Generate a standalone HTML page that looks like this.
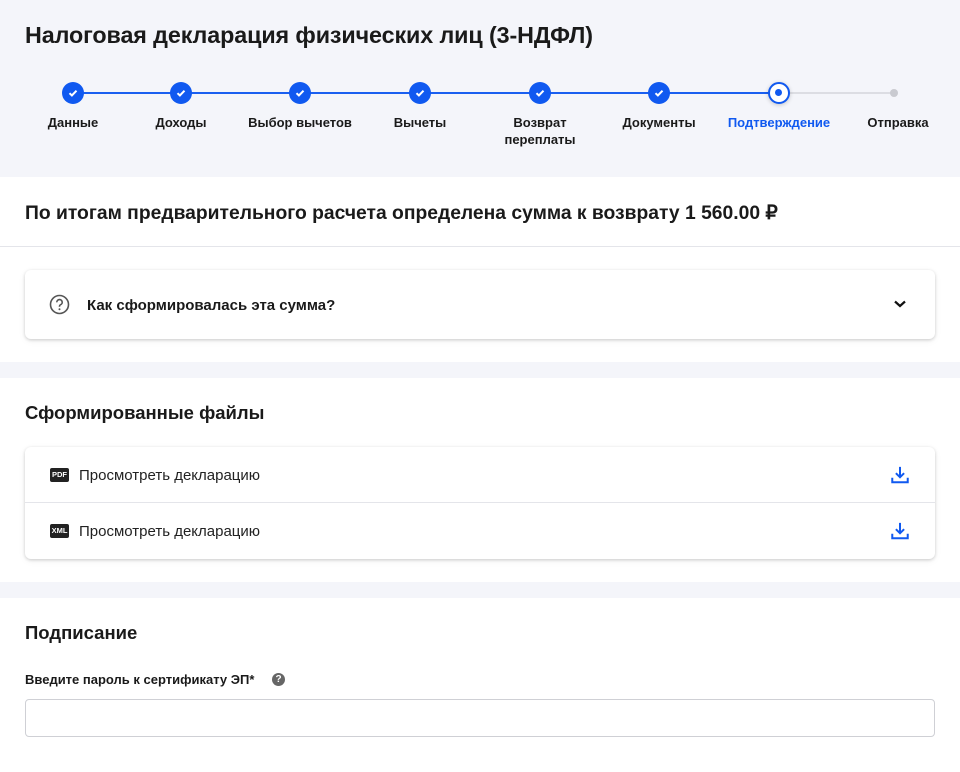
<!DOCTYPE html>
<html><head><meta charset="utf-8"><style>
*{margin:0;padding:0;box-sizing:border-box}
body{width:960px;height:772px;overflow:hidden;background:#f4f5fa;font-family:"Liberation Sans",Arial,sans-serif;color:#1a1a1a;position:relative}
.a{position:absolute}
h1{position:absolute;left:25px;top:22px;font-size:23.3px;font-weight:bold;letter-spacing:-0.1px}
.line{position:absolute;top:92px;height:2px;background:#1a5ff0}
.dot{position:absolute;width:22px;height:22px;border-radius:50%;background:#1059f0;top:82px;margin-left:-11px}
.dot svg{position:absolute;left:5px;top:5px}
.lbl{position:absolute;top:113px;font-size:13px;font-weight:bold;text-align:center;width:120px;margin-left:-60px;line-height:17px}
.sec{position:absolute;left:0;width:960px;background:#fff}
.card{position:absolute;left:25px;width:910px;background:#fff;border-radius:6px;box-shadow:0 1px 3px rgba(0,0,0,.18),0 2px 8px rgba(0,0,0,.05)}
.ft{font-size:15px;color:#222}
.ic{position:absolute;left:25px;width:19px;height:14px;background:#222;color:#fff;font-size:7.5px;font-weight:bold;text-align:center;line-height:14px;border-radius:2px}
</style></head><body>
<h1>Налоговая декларация физических лиц (3-НДФЛ)</h1>
<div class="line" style="left:73px;width:706px"></div>
<div class="line" style="left:790px;width:104px;background:#dcdde3"></div>
<div class="dot" style="left:73px"><svg width="12" height="12" viewBox="0 0 12 12"><path d="M2.5 6.2l2.4 2.3 4.6-4.8" stroke="#fff" stroke-width="2" fill="none"/></svg></div>
<div class="dot" style="left:181px"><svg width="12" height="12" viewBox="0 0 12 12"><path d="M2.5 6.2l2.4 2.3 4.6-4.8" stroke="#fff" stroke-width="2" fill="none"/></svg></div>
<div class="dot" style="left:300px"><svg width="12" height="12" viewBox="0 0 12 12"><path d="M2.5 6.2l2.4 2.3 4.6-4.8" stroke="#fff" stroke-width="2" fill="none"/></svg></div>
<div class="dot" style="left:420px"><svg width="12" height="12" viewBox="0 0 12 12"><path d="M2.5 6.2l2.4 2.3 4.6-4.8" stroke="#fff" stroke-width="2" fill="none"/></svg></div>
<div class="dot" style="left:540px"><svg width="12" height="12" viewBox="0 0 12 12"><path d="M2.5 6.2l2.4 2.3 4.6-4.8" stroke="#fff" stroke-width="2" fill="none"/></svg></div>
<div class="dot" style="left:659px"><svg width="12" height="12" viewBox="0 0 12 12"><path d="M2.5 6.2l2.4 2.3 4.6-4.8" stroke="#fff" stroke-width="2" fill="none"/></svg></div>
<div class="dot" style="left:779px;background:#fff;border:2.5px solid #1059f0;box-shadow:0 1px 4px rgba(0,0,0,.2)"><div class="a" style="left:5px;top:5px;width:7px;height:7px;border-radius:50%;background:#1059f0"></div></div>
<div class="a" style="left:890px;top:89px;width:8px;height:8px;border-radius:50%;background:#c9cad0"></div>
<div class="lbl" style="left:73px;top:114px">Данные</div>
<div class="lbl" style="left:181px;top:114px">Доходы</div>
<div class="lbl" style="left:300px;top:114px">Выбор вычетов</div>
<div class="lbl" style="left:420px;top:114px">Вычеты</div>
<div class="lbl" style="left:540px;top:114px">Возврат<br>переплаты</div>
<div class="lbl" style="left:659px;top:114px">Документы</div>
<div class="lbl" style="left:779px;top:114px;color:#1059f0">Подтверждение</div>
<div class="lbl" style="left:898px;top:114px">Отправка</div>

<div class="sec" style="top:177px;height:185px">
<div class="a" style="left:25px;top:24px;font-size:19.3px;font-weight:bold">По итогам предварительного расчета определена сумма к возврату 1 560.00 ₽</div>
<div class="a" style="left:0;top:69px;width:960px;height:1px;background:#e4e5ea"></div>
<div class="card" style="top:93px;height:69px">
<svg class="a" style="left:24px;top:24px" width="21" height="21" viewBox="0 0 21 21"><circle cx="10.5" cy="10.5" r="9" stroke="#555" stroke-width="1.6" fill="none"/><path d="M7.8 8.3a2.7 2.7 0 1 1 3.6 2.5c-.6.3-.9.7-.9 1.4v.6" stroke="#555" stroke-width="1.6" fill="none"/><circle cx="10.5" cy="15.2" r="1" fill="#555"/></svg>
<div class="a" style="left:62px;top:27px;font-size:15px;font-weight:bold">Как сформировалась эта сумма?</div>
<svg class="a" style="left:868px;top:29px" width="14" height="10" viewBox="0 0 14 10"><path d="M2 2.5l5 4.5 5-4.5" stroke="#111" stroke-width="2.2" fill="none"/></svg>
</div>
</div>

<div class="sec" style="top:378px;height:204px">
<div class="a" style="left:25px;top:24px;font-size:18.5px;font-weight:bold">Сформированные файлы</div>
<div class="card" style="top:69px;height:112px">
<div class="ic" style="top:21px">PDF</div>
<div class="a ft" style="left:54px;top:20px">Просмотреть декларацию</div>
<div class="a" style="left:0;top:55px;width:910px;height:1px;background:#e4e5ea"></div>
<div class="ic" style="top:77px">XML</div>
<div class="a ft" style="left:54px;top:76px">Просмотреть декларацию</div>
<svg class="a" style="left:865px;top:18px" width="20" height="20" viewBox="0 0 22 22"><path d="M11 2v11M6.5 9l4.5 4.5L15.5 9M2.5 14v5h17v-5" stroke="#1059f0" stroke-width="2.2" fill="none"/></svg>
<svg class="a" style="left:865px;top:74px" width="20" height="20" viewBox="0 0 22 22"><path d="M11 2v11M6.5 9l4.5 4.5L15.5 9M2.5 14v5h17v-5" stroke="#1059f0" stroke-width="2.2" fill="none"/></svg>
</div>
</div>

<div class="sec" style="top:598px;height:174px">
<div class="a" style="left:25px;top:24px;font-size:18.5px;font-weight:bold">Подписание</div>
<div class="a" style="left:25px;top:74px;font-size:13px;font-weight:bold">Введите пароль к сертификату ЭП*</div>
<div class="a" style="left:272px;top:75px;width:13px;height:13px;border-radius:50%;background:#666;color:#fff;font-size:10px;font-weight:bold;text-align:center;line-height:13px">?</div>
<div class="a" style="left:25px;top:101px;width:910px;height:38px;border:1px solid #cfd0d5;border-radius:4px"></div>
</div>
</body></html>
